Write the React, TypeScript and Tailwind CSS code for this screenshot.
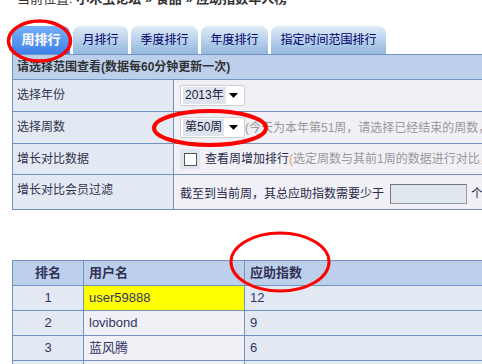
import React from 'react';

const tabs = [
  { label: '周排行', w: 'w-[58px]', active: true },
  { label: '月排行', w: 'w-[55px]' },
  { label: '季度排行', w: 'w-[67px]' },
  { label: '年度排行', w: 'w-[67px]' },
  { label: '指定时间范围排行', w: 'w-[115px]' },
];

const rows = [
  { rank: 1, name: 'user59888', score: 12, hl: true },
  { rank: 2, name: 'lovibond', score: 9 },
  { rank: 3, name: '蓝风腾', score: 6 },
  { rank: 4, name: '', score: '' },
];

const Arrow = () => (
  <svg width="9" height="5" viewBox="0 0 9 5" className="ml-auto mr-[4px]">
    <path d="M0 0h9L4.5 5z" fill="#000" />
  </svg>
);

const Select: React.FC<{ value: string }> = ({ value }) => (
  <div className="flex items-center w-[65px] h-[21px] bg-white border border-[#cfcfcf] rounded-[2px] px-[2px]">
    <span className="bg-[#dfe5ee] px-[2px] leading-[17px] text-[#1d1d3a]">{value}</span>
    <Arrow />
  </div>
);

export default function App() {
  return (
    <div
      className="relative w-[482px] h-[364px] overflow-hidden bg-white text-[12px] text-[#33334d]"
      style={{ fontFamily: '"Liberation Sans", "Noto Sans CJK SC", sans-serif' }}
    >
      {/* breadcrumb, mostly scrolled off */}
      <div className="h-[26px] overflow-hidden">
        <div className="-mt-[9px] pl-[17px] text-[13px] leading-[16px] text-[#333] whitespace-nowrap">
          当前位置: <b>小木虫论坛</b> <b>»</b> <b>食品</b> <b>»</b> <b>应助指数年人榜</b>
        </div>
      </div>

      {/* tabs */}
      <div className="flex gap-[3px] pl-[12px] h-[28px]">
        {tabs.map((t) => (
          <div
            key={t.label}
            className={`${t.w} h-[28px] flex items-center justify-center rounded-t-[7px] ${
              t.active
                ? 'bg-gradient-to-b from-[#78b0f7] to-[#3d80ea] text-white font-bold text-[13px]'
                : 'bg-gradient-to-b from-[#dfecf9] to-[#93b7de] text-[#000066]'
            }`}
          >
            {t.label}
          </div>
        ))}
      </div>

      {/* filter panel */}
      <div className="ml-[12px] w-[600px] border border-[#7293c0] bg-[#f0f0f6]">
        <div className="h-[25px] flex items-center pl-[4px] bg-[#bcd0ec] border-b border-[#7293c0] font-bold text-[#333]">
          请选择范围查看(数据每60分钟更新一次)
        </div>
        <div className="flex h-[32px] border-b border-[#7293c0]">
          <div className="w-[161px] border-r border-[#7293c0] bg-[#e2e9f3] pl-[4px] pt-[6px]">选择年份</div>
          <div className="flex items-center pl-[6px]">
            <Select value="2013年" />
          </div>
        </div>
        <div className="flex h-[32px] border-b border-[#7293c0]">
          <div className="w-[161px] border-r border-[#7293c0] bg-[#e2e9f3] pl-[4px] pt-[6px]">选择周数</div>
          <div className="flex items-center pl-[6px] whitespace-nowrap">
            <Select value="第50周" />
            <span className="text-[#999]">(今天为本年第51周，请选择已经结束的周数，</span>
          </div>
        </div>
        <div className="flex h-[31px] border-b border-[#7293c0]">
          <div className="w-[161px] border-r border-[#7293c0] bg-[#e2e9f3] pl-[4px] pt-[6px]">增长对比数据</div>
          <div className="flex items-center pl-[6px] whitespace-nowrap">
            <div className="w-[20px] h-[20px] bg-[#dfe5ee] flex items-center justify-center mr-[5px]">
              <div className="w-[13px] h-[13px] bg-white border border-[#555]" />
            </div>
            <span className="text-[#2a2a4a]">查看周增加排行</span>
            <span className="text-[#e0a060]">(</span>
            <span className="text-[#999]">选定周数与其前1周的数据进行对比，</span>
          </div>
        </div>
        <div className="flex h-[34px]">
          <div className="w-[161px] border-r border-[#7293c0] bg-[#e2e9f3] pl-[4px] pt-[6px]">增长对比会员过滤</div>
          <div className="flex items-center pl-[6px] pt-[4px] whitespace-nowrap text-[#2a2a4a]">
            截至到当前周，其总应助指数需要少于
            <div className="w-[77px] h-[20px] ml-[6px] mr-[4px] bg-[#e1e7ef] border border-[#999] border-t-[#777] border-l-[#777]" />
            个人
          </div>
        </div>
      </div>

      {/* ranking table */}
      <div className="ml-[12px] mt-[50px] w-[600px] border border-[#7293c0]">
        <div className="flex h-[25px] bg-[#bcd0ec] border-b border-[#7293c0] font-bold text-[13px] text-[#333355]">
          <div className="w-[71px] border-r border-[#7293c0] flex items-center justify-center">排名</div>
          <div className="w-[161px] border-r border-[#7293c0] flex items-center pl-[5px]">用户名</div>
          <div className="flex items-center pl-[5px]">应助指数</div>
        </div>
        {rows.map((r) => (
          <div key={r.rank} className="flex h-[25px] border-b border-[#7293c0] text-[13px] text-[#333366]">
            <div className="w-[71px] border-r border-[#7293c0] bg-[#e2e9f3] flex items-center justify-center">
              {r.name ? r.rank : ''}
            </div>
            <div
              className={`w-[161px] border-r border-[#7293c0] flex items-center pl-[5px] ${
                r.hl ? 'bg-[#ffff00]' : 'bg-[#f0f0f6]'
              }`}
            >
              {r.name}
            </div>
            <div className="flex-1 bg-[#e2e9f3] flex items-center pl-[5px]">{r.score}</div>
          </div>
        ))}
      </div>

      {/* red annotation circles */}
      <svg className="absolute inset-0 pointer-events-none" width="482" height="364">
        <ellipse cx="39.5" cy="41" rx="31" ry="20" fill="none" stroke="#f00" strokeWidth="3.5" />
        <ellipse cx="210" cy="128" rx="56" ry="17" fill="none" stroke="#f00" strokeWidth="4" />
        <ellipse cx="280" cy="262" rx="49" ry="29" fill="none" stroke="#f00" strokeWidth="3" />
      </svg>
    </div>
  );
}
